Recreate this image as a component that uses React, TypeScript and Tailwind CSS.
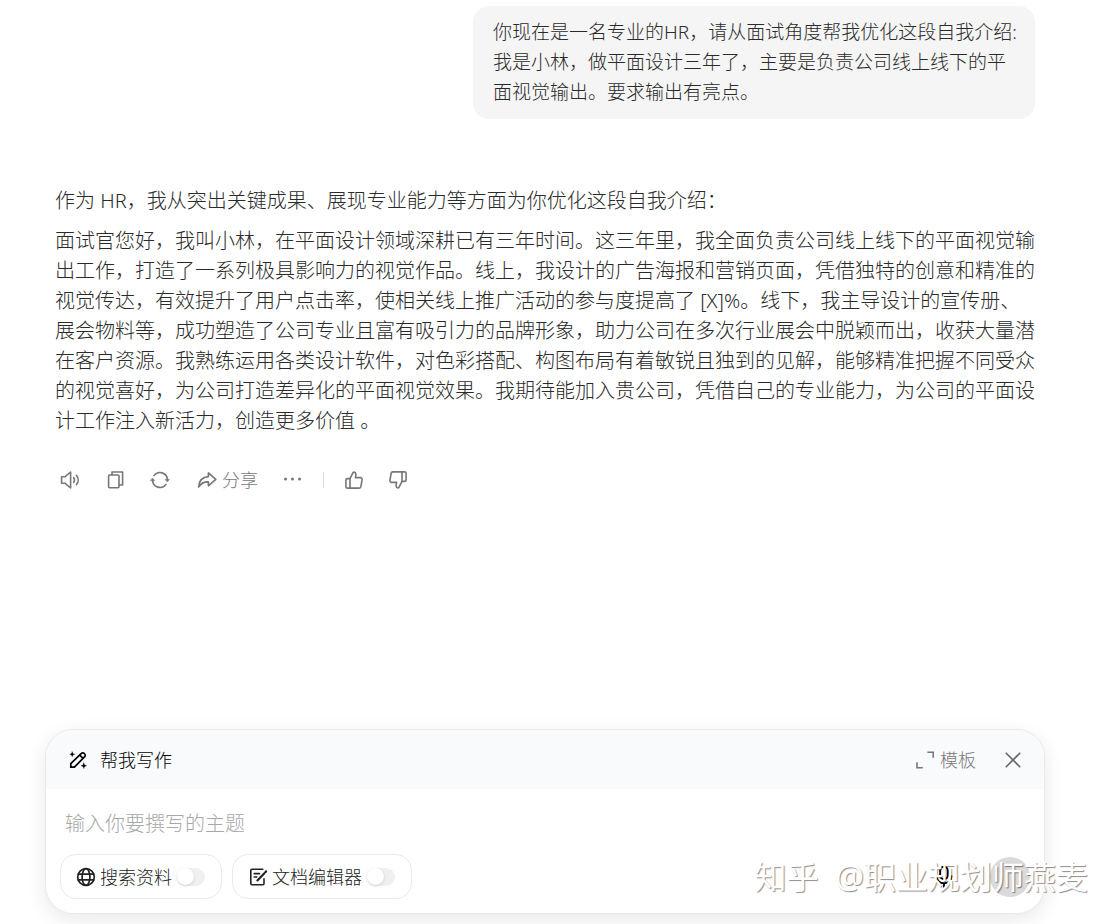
import type { ReactNode } from 'react';

function Icon({ size = 'size-5', children, width = 1.6 }: { size?: string; children: ReactNode; width?: number }) {
  return (
    <svg
      viewBox="0 0 20 20"
      className={`${size} shrink-0`}
      fill="none"
      stroke="currentColor"
      strokeWidth={width}
      strokeLinecap="round"
      strokeLinejoin="round"
      aria-hidden="true"
    >
      {children}
    </svg>
  );
}

const thumb = (
  <>
    <path d="M6 8.6 9.3 2.2c1.8-.2 2.9.9 2.6 2.7L11.4 7.6h5c1.1 0 1.9.9 1.7 2l-1.2 6.9c-.1 1-.9 1.6-1.8 1.6H6" />
    <path d="M6 8.6v9.5H3.3c-.8 0-1.4-.6-1.4-1.4V10c0-.8.6-1.4 1.4-1.4z" />
  </>
);

function ToolSwitch({ id, label, icon }: { id: string; label: string; icon: ReactNode }) {
  return (
    <label
      htmlFor={id}
      className="flex h-[45px] items-center rounded-2xl border border-[#ebebeb] pr-4 pl-[15px] text-lg text-[#222]"
    >
      {icon}
      <span className="ml-1">{label}</span>
      <input
        id={id}
        type="checkbox"
        role="switch"
        className="ml-[5px] h-[18px] w-7 shrink-0 appearance-none rounded-full bg-[#f0f0f0] before:block before:size-[17px] before:rounded-full before:bg-white before:shadow-[0_1px_3px_rgba(0,0,0,0.16)] checked:bg-blue-500 checked:before:ml-auto"
      />
    </label>
  );
}

export default function App() {
  return (
    <div className="relative flex min-h-screen flex-col overflow-hidden bg-white pt-1.5 pr-[71px] pb-2.5 pl-[45px] font-['Noto_Sans','Noto_Sans_CJK_SC',sans-serif] font-light text-[#2a2a2a]">
      <main className="flex-1 px-2.5">
        <div className="ml-auto w-fit max-w-[562px] rounded-2xl bg-[#f5f5f5] pt-[11px] pr-[15px] pb-3 pl-5 text-[19px] leading-[30px]">
          你现在是一名专业的HR，请从面试角度帮我优化这段自我介绍:
          <br />
          我是小林，做平面设计三年了，主要是负责公司线上线下的平面视觉输出。要求输出有亮点。
        </div>

        <article className="mt-[67px] text-xl leading-[30px]">
          <p>作为 HR，我从突出关键成果、展现专业能力等方面为你优化这段自我介绍：</p>
          <p className="mt-2.5">
            面试官您好，我叫小林，在平面设计领域深耕已有三年时间。这三年里，我全面负责公司线上线下的平面视觉输出工作，打造了一系列极具影响力的视觉作品。线上，我设计的广告海报和营销页面，凭借独特的创意和精准的视觉传达，有效提升了用户点击率，使相关线上推广活动的参与度提高了
            [X]%。线下，我主导设计的宣传册、展会物料等，成功塑造了公司专业且富有吸引力的品牌形象，助力公司在多次行业展会中脱颖而出，收获大量潜在客户资源。我熟练运用各类设计软件，对色彩搭配、构图布局有着敏锐且独到的见解，能够精准把握不同受众的视觉喜好，为公司打造差异化的平面视觉效果。我期待能加入贵公司，凭借自己的专业能力，为公司的平面设计工作注入新活力，创造更多价值
            。
          </p>
        </article>

        <div className="mt-[34px] flex h-5 items-center pl-[5px] text-lg text-[#777]">
          <button type="button" aria-label="朗读">
            <Icon>
              <path d="M1.6 6.8h3.2L10.6 2v16l-5.8-4.8H1.6z" />
              <path d="M13.6 7.6c1.1 1.4 1.1 3.4 0 4.8M16.4 5.4c2.4 2.7 2.4 6.5 0 9.2" />
            </Icon>
          </button>
          <button type="button" aria-label="复制" className="ml-[25px]">
            <Icon>
              <rect x="3.6" y="5" width="10.4" height="12.8" rx="1" />
              <path d="M7 4.8V2h10.6v13h-3.4" />
            </Icon>
          </button>
          <button type="button" aria-label="重新生成" className="ml-[25px]">
            <Icon>
              <path d="M4 5.6a7.4 7.4 0 0 1 13.4 4.2M16 14.4A7.4 7.4 0 0 1 2.6 10.2" />
              <path d="M15.4 9.4h4l-2 2.4zM.6 10.6h4l-2-2.4z" fill="currentColor" strokeWidth="0.6" />
            </Icon>
          </button>
          <button type="button" className="ml-[27px] flex items-center gap-[5px]">
            <Icon>
              <path d="M11.4 2.8 18.8 9.4l-7.4 6.4v-3.9c-4.4-.2-7.2 1.2-9.8 5.1.4-6 3.6-10 9.8-10.4z" />
            </Icon>
            分享
          </button>
          <button type="button" aria-label="更多" className="ml-[25px]">
            <svg viewBox="0 0 20 20" className="size-5" fill="currentColor" aria-hidden="true">
              <circle cx="2.5" cy="9" r="1.5" />
              <circle cx="9.5" cy="9" r="1.5" />
              <circle cx="16.5" cy="9" r="1.5" />
            </svg>
          </button>
          <span className="ml-5 h-4 w-px bg-[#ddd]" />
          <button type="button" aria-label="赞" className="ml-5">
            <Icon>{thumb}</Icon>
          </button>
          <button type="button" aria-label="踩" className="ml-6">
            <Icon>
              <g transform="rotate(180 10 10)">{thumb}</g>
            </Icon>
          </button>
        </div>
      </main>

      <form className="rounded-[28px] border border-[#e9e9ea] bg-white shadow-[0_6px_20px_rgba(0,0,0,0.09)]">
        <header className="flex h-[59px] items-center rounded-t-[27px] bg-[#f9fafc] pr-[21px] pl-[22px] text-lg">
          <span className="text-black">
            <Icon width={1.7}>
              <path d="M2.8 17.2v-3.6L13.4 3.4a1.9 1.9 0 0 1 2.7 0l.6.6a1.9 1.9 0 0 1 0 2.7L6.4 17.2z" />
              <path d="M12 5.4 14.8 8.2" />
              <path d="M4.2 1.8l.7 1.8 1.8.7-1.8.7-.7 1.8-.7-1.8-1.8-.7 1.8-.7zM15.8 12.8l.8 2.1 2.1.8-2.1.8-.8 2.1-.8-2.1-2.1-.8 2.1-.8z" fill="currentColor" strokeWidth="0.3" />
            </Icon>
          </span>
          <h2 className="ml-3 text-black">帮我写作</h2>
          <button type="button" className="ml-auto flex items-center gap-[5px] text-[#777]">
            <Icon>
              <path d="M12.4 2.2h5.8v5.6M2 12.2v5.6h5.8" strokeLinecap="butt" strokeLinejoin="miter" />
            </Icon>
            模板
          </button>
          <button type="button" aria-label="关闭" className="ml-[27px] text-[#666]">
            <Icon>
              <path d="m3.2 3.2 13.6 13.6M16.8 3.2 3.2 16.8" />
            </Icon>
          </button>
        </header>

        <div className="px-[19px] pt-[19px]">
          <input
            type="text"
            aria-label="写作主题"
            placeholder="输入你要撰写的主题"
            className="block h-[30px] w-full text-xl outline-none placeholder:text-[#a8a8a8]"
          />
        </div>

        <div className="flex items-center gap-2.5 px-3.5 pt-4 pb-3.5">
          <ToolSwitch
            id="search"
            label="搜索资料"
            icon={
              <Icon width={1.7}>
                <circle cx="10" cy="10" r="8.3" />
                <ellipse cx="10" cy="10" rx="3.9" ry="8.3" />
                <path d="M2.2 7.2h15.6M2.2 12.8h15.6" />
              </Icon>
            }
          />
          <ToolSwitch
            id="editor"
            label="文档编辑器"
            icon={
              <Icon width={1.6}>
                <path d="M14.8 2.2H4a1.2 1.2 0 0 0-1.2 1.2v13.2A1.2 1.2 0 0 0 4 17.8h10.8a1.2 1.2 0 0 0 1.2-1.2v-4.8" />
                <path d="M6.2 6.6h5.4M6.2 10h2.6" />
                <path d="M9.4 13.4 16.4 6.2M17.6 4.9l.5-.5" strokeWidth="2.2" />
              </Icon>
            }
          />
          <button type="button" aria-label="语音输入" className="ml-auto text-black">
            <Icon size="size-6">
              <rect x="6.8" y="1.4" width="6.4" height="10.4" rx="3.2" />
              <path d="M3.8 9.4c.4 3.8 2.9 5.8 6.2 5.8s5.8-2 6.2-5.8M10 15.4V19" />
            </Icon>
          </button>
          <button type="submit" aria-label="发送" className="ml-6 size-10 rounded-full bg-[#dadada]" />
        </div>
      </form>

      <div className="pointer-events-none absolute right-7 bottom-6 text-[32px] leading-[46px] font-normal whitespace-nowrap text-white [text-shadow:1px_1px_1px_rgba(0,0,0,0.45)]">
        知乎{'\u00a0 '}@职业规划师燕麦
      </div>
    </div>
  );
}
